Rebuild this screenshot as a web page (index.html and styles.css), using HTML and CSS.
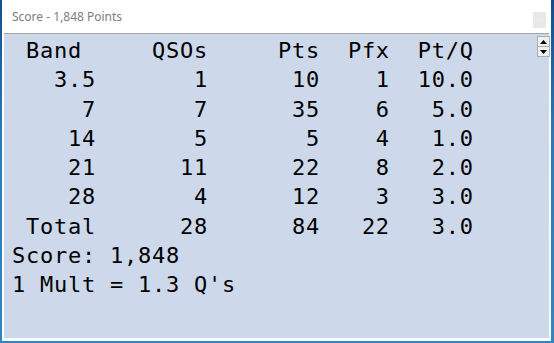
FILE: index.html
```html
<!DOCTYPE html>
<html lang="en">
<head>
    <meta charset="UTF-8">
    <title>Score - 1,848 Points</title>
    <link rel="stylesheet" href="styles.css">
</head>
<body>
<div class="window">
    <div class="titlebar">
        <span class="title">Score - 1,848 Points</span>
        <span class="sysbtn">&#9633;</span>
    </div>
    <div class="content">
<pre class="score"> Band     QSOs     Pts  Pfx  Pt/Q
   3.5       1      10    1  10.0
     7       7      35    6   5.0
    14       5       5    4   1.0
    21      11      22    8   2.0
    28       4      12    3   3.0
 Total      28      84   22   3.0
Score: 1,848
1 Mult = 1.3 Q's</pre>
        <div class="spin">
            <div class="spin-btn"><svg width="7" height="4" viewBox="0 0 7 4"><path d="M3.5 0L7 4H0z" fill="#000"/></svg></div>
            <div class="spin-btn"><svg width="7" height="4" viewBox="0 0 7 4"><path d="M0 0H7L3.5 4z" fill="#000"/></svg></div>
        </div>
    </div>
</div>
</body>
</html>
```
FILE: styles.css
```css
html, body { margin: 0; height: 343px; overflow: hidden; }
body { background: linear-gradient(#0f4f8f, #2a7bbd 40%, #2f86c4); }
.window { margin: 0 3px 0 2px; height: 341px; box-sizing: border-box; background: #fff; padding: 0 2px 3px 2px; display: flex; flex-direction: column; }
.titlebar { height: 33px; flex: none; display: flex; align-items: center; padding-left: 8px; position: relative; }
.title { font: 12px "Noto Sans", "Open Sans", sans-serif; color: #7d7d7d; }
.sysbtn { position: absolute; right: 3px; top: 12px; width: 13px; height: 16px; background: #e8e8e8; color: #f4f4f4; font-size: 8px; line-height: 16px; text-align: center; }
.content { flex: 1; background: #cdd9ea; border-top: 1px solid #a3a3a3; position: relative; }
.score { margin: 0; padding: 2px 0 0 8px; font: 22px/29.25px "DejaVu Sans Mono", monospace; letter-spacing: 0.75px; color: #000; }
.spin { position: absolute; right: -1px; top: 2px; display: flex; flex-direction: column; }
.spin-btn { width: 11px; height: 9px; border: 1px solid #adadad; background: #f0f0f0; display: flex; align-items: center; justify-content: center; }
.spin-btn + .spin-btn { border-top: none; }
```
